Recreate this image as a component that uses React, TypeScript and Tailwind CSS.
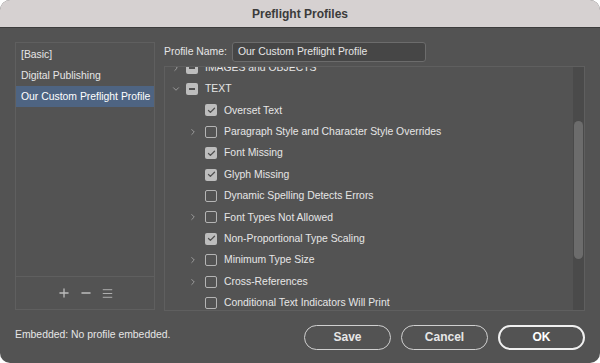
import { Plus, Minus, Menu, ChevronDown, ChevronRight, Check } from 'lucide-react';

type Row = { label: string; level: 0 | 1; state: 'on' | 'off' | 'mixed'; expandable?: boolean; open?: boolean };

const rows: Row[] = [
    { label: 'IMAGES and OBJECTS', level: 0, state: 'mixed', expandable: true },
    { label: 'TEXT', level: 0, state: 'mixed', expandable: true, open: true },
    { label: 'Overset Text', level: 1, state: 'on' },
    { label: 'Paragraph Style and Character Style Overrides', level: 1, state: 'off', expandable: true },
    { label: 'Font Missing', level: 1, state: 'on' },
    { label: 'Glyph Missing', level: 1, state: 'on' },
    { label: 'Dynamic Spelling Detects Errors', level: 1, state: 'off' },
    { label: 'Font Types Not Allowed', level: 1, state: 'off', expandable: true },
    { label: 'Non-Proportional Type Scaling', level: 1, state: 'on' },
    { label: 'Minimum Type Size', level: 1, state: 'off', expandable: true },
    { label: 'Cross-References', level: 1, state: 'off', expandable: true },
    { label: 'Conditional Text Indicators Will Print', level: 1, state: 'off' },
];

const profiles = ['[Basic]', 'Digital Publishing', 'Our Custom Preflight Profile'];

function Box({ state }: { state: Row['state'] }) {
    if (state === 'off') {
        return <span className="w-[12px] h-[12px] rounded-[2px] border border-[#b4b4b4] shrink-0" />;
    }
    return (
        <span className="w-[12px] h-[12px] rounded-[2px] bg-[#bdbdbd] shrink-0 flex items-center justify-center">
            {state === 'on' ? (
                <Check className="w-[9px] h-[9px] text-[#505050]" strokeWidth={3.5} />
            ) : (
                <span className="w-[6px] h-[2px] bg-[#505050]" />
            )}
        </span>
    );
}

export default function App() {
    return (
        <div className="w-[600px] h-[363px] bg-white font-['Liberation_Sans',sans-serif] text-[10.4px] text-[#e6e6e6]">
            <div className="w-full h-full rounded-[10px] overflow-hidden bg-[#535353] flex flex-col">
                <div className="h-[28px] shrink-0 bg-[#d6d1d1] border-b border-[#3c3c3c] flex items-center justify-center text-[12px] font-bold text-[#3b3b3b]">
                    Preflight Profiles
                </div>
                <div className="flex-1 flex pl-[15px] pr-[15px] pt-[14px]">
                    {/* profile list */}
                    <div className="w-[140px] h-[268px] border border-[#5f5f5f] flex flex-col">
                        <div className="flex-1 pt-[1px]">
                            {profiles.map((p, i) => (
                                <div
                                    key={p}
                                    className={`h-[21px] flex items-center pl-[5px] whitespace-nowrap ${i === 2 ? 'bg-[#4e6482] text-white' : ''}`}
                                >
                                    {p}
                                </div>
                            ))}
                        </div>
                        <div className="h-[33px] border-t border-[#5f5f5f] flex items-center justify-center gap-[8px] text-[#bdbdbd]">
                            <Plus className="w-[14px] h-[14px]" strokeWidth={2.2} />
                            <Minus className="w-[14px] h-[14px]" strokeWidth={2.2} />
                            <Menu className="w-[13px] h-[13px]" strokeWidth={1.6} />
                        </div>
                    </div>

                    {/* right side */}
                    <div className="flex-1 ml-[9px] flex flex-col">
                        <div className="flex items-center h-[21px] -mt-[1px]">
                            <span className="w-[68px]">Profile Name:</span>
                            <div className="w-[194px] h-[20px] bg-[#464646] border border-[#6c6c6c] rounded-[3px] flex items-center pl-[5px]">
                                Our Custom Preflight Profile
                            </div>
                        </div>
                        <div className="mt-[4px] h-[245px] border border-[#5f5f5f] flex overflow-hidden">
                            <div className="flex-1 overflow-hidden">
                                <div className="-mt-[10px]">
                                    {rows.map((r) => (
                                        <div key={r.label} className="h-[21.4px] flex items-center whitespace-nowrap">
                                            <span className={`${r.level === 0 ? 'w-[21px] pl-[6px]' : 'w-[40px] pl-[23px]'} shrink-0 text-[#a8a8a8]`}>
                                                {r.expandable &&
                                                    (r.open ? (
                                                        <ChevronDown className="w-[10px] h-[10px]" strokeWidth={2} />
                                                    ) : (
                                                        <ChevronRight className="w-[10px] h-[10px]" strokeWidth={2} />
                                                    ))}
                                            </span>
                                            <Box state={r.state} />
                                            <span className="ml-[7px]">{r.label}</span>
                                        </div>
                                    ))}
                                </div>
                            </div>
                            <div className="w-[11px] bg-[#4a4a4a] pt-[54px]">
                                <div className="w-[9px] ml-[1px] h-[138px] rounded-full bg-[#6c6c6c]" />
                            </div>
                        </div>
                    </div>
                </div>

                {/* footer */}
                <div className="h-[50px] shrink-0 flex items-center pl-[15px] pr-[15px] pb-[2px]">
                    <span className="flex-1 -mt-[5px]">Embedded: No profile embedded.</span>
                    <div className="flex gap-[10px] text-[12px] font-bold">
                        <button className="w-[87px] h-[25px] rounded-full border-[1.5px] border-[#d0d0d0] text-[#e6e6e6]">Save</button>
                        <button className="w-[87px] h-[25px] rounded-full border-[1.5px] border-[#d0d0d0] text-[#e6e6e6]">Cancel</button>
                        <button className="w-[87px] h-[25px] rounded-full border-2 border-[#f0f0f0] text-white">OK</button>
                    </div>
                </div>
            </div>
        </div>
    );
}
